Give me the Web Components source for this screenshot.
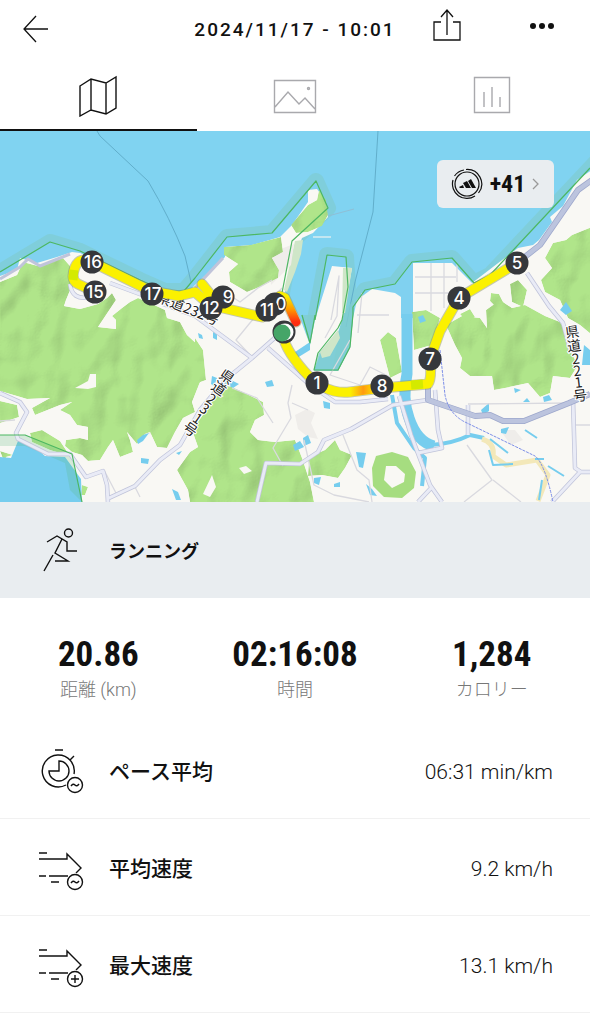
<!DOCTYPE html>
<html lang="ja">
<head>
<meta charset="utf-8">
<meta name="viewport" content="width=device-width, initial-scale=1">
<title>ランニング</title>
<style>
    body {
        margin: 0;
        background: #fff;
        color: #111;
        font-family: Roboto, "Noto Sans CJK JP", sans-serif;
    }
</style>
</head>
<body>
<workout-page></workout-page>

<script>
const ICONS = {
    run: `<svg width="48" height="48" viewBox="0 0 48 48"><circle cx="31.500" cy="7" r="4"/><path d="M10 16l10-6 10 6v9h10M25 13l-7 14 13 8H18M16 29L7 45"/></svg>`,
    pace: `<svg width="48" height="48" viewBox="0 0 48 48"><path d="M18 4h8M37 10l-4 4M37 28a16 16 0 1 0-8 11M22 24V15a10 10 0 1 1-10 10h10z"/><circle cx="38" cy="39" r="7.500"/><path d="M34 40q2-3 4-1t4-1"/></svg>`,
    speed: `<svg width="48" height="48" viewBox="0 0 48 48"><path d="M2 10h8M2 16h28V11l14 14-5 5M2 33h7M12 33h19M14 39h8"/><circle cx="38" cy="39" r="7.500"/><path d="M34 40q2-3 4-1t4-1"/></svg>`,
    max: `<svg width="48" height="48" viewBox="0 0 48 48"><path d="M2 10h8M2 16h28V11l14 14-5 5M2 33h7M12 33h19M14 39h8"/><circle cx="38" cy="39" r="7.500"/><path d="M34 39h8M38 35v8"/></svg>`
};

class WorkoutHeader extends HTMLElement {
    constructor() {
        super();
        this.attachShadow({mode: "open"}).innerHTML = `
            <style>
                :host {
                    display: block;
                }
                header {
                    display: grid;
                    grid-template-columns: 1fr auto 1fr;
                    align-items: center;
                    height: 58px;
                    padding: 0 20px;
                }
                h1 {
                    margin: 0;
                    font-size: 19px;
                    font-weight: 500;
                    letter-spacing: 2px;
                }
                .actions {
                    display: flex;
                    justify-content: flex-end;
                    gap: 63px;
                }
                button {
                    display: flex;
                    padding: 0;
                    border: 0;
                    background: none;
                    justify-self: start;
                }
                svg {
                    fill: none;
                    stroke: #111;
                    stroke-width: 1.3;
                }
            </style>
            <header>
                <button aria-label="戻る">
                    <svg width="40" height="40" viewBox="0 0 40 40"><path d="M16 7L4 20l12 13M4 20h24"/></svg>
                </button>
                <h1><slot></slot></h1>
                <div class="actions">
                    <button aria-label="共有">
                        <svg width="40" height="40" viewBox="0 0 40 40"><path d="M14 13H7v18h26V13h-7M20 26V2M14 8l6-7 6 7"/></svg>
                    </button>
                    <button aria-label="メニュー">
                        <svg width="40" height="40" viewBox="0 0 40 40" style="fill:#111;stroke:none"><circle cx="3" cy="17" r="3"/><circle cx="12" cy="17" r="3"/><circle cx="21" cy="17" r="3"/></svg>
                    </button>
                </div>
            </header>
        `;
    }
}

class TabBar extends HTMLElement {
    constructor() {
        super();
        this.attachShadow({mode: "open"}).innerHTML = `
            <style>
                :host {
                    display: block;
                }
                nav {
                    display: flex;
                    height: 73px;
                }
                button {
                    flex: 1;
                    display: flex;
                    align-items: center;
                    justify-content: center;
                    padding: 2px 0 0;
                    border: 0;
                    border-bottom: 2px solid transparent;
                    background: none;
                    color: #a9a9ad;
                }
                .active {
                    color: #111;
                    border-color: #111;
                }
                svg {
                    fill: none;
                    stroke: currentColor;
                    stroke-width: 1.400;
                }
            </style>
            <nav>
                <button class="active" aria-label="マップ">
                    <svg width="44" height="44" viewBox="0 0 44 44"><path d="M4 13l11-7 15 4 10-6v31l-10 6-15-4-11 6zM15 6v31M30 10v31"/></svg>
                </button>
                <button aria-label="写真">
                    <svg width="44" height="44" viewBox="0 0 44 44"><path d="M1.500 7.500h41v32h-41zM2 34l13-15 11 12 6-6 10 11"/><circle cx="35.500" cy="15.500" r="1"/></svg>
                </button>
                <button aria-label="グラフ">
                    <svg width="44" height="44" viewBox="0 0 44 44"><path d="M4.500 4.500h35v35h-35zM14 19v15M22 14v20M30 24v10"/></svg>
                </button>
            </nav>
        `;
    }
}

class PointsBadge extends HTMLElement {
    constructor() {
        super();
        this.attachShadow({mode: "open"}).innerHTML = `
            <style>
                :host {
                    display: block;
                }
                button {
                    display: flex;
                    align-items: center;
                    justify-content: space-between;
                    width: 117px;
                    height: 48px;
                    padding: 0 14px;
                    border: 0;
                    border-radius: 6px;
                    background: #e9edf0;
                    color: #111;
                    font: bold 24px "Roboto Condensed", sans-serif;
                }
                svg {
                    fill: none;
                    stroke: #111;
                }
            </style>
            <button>
                <svg width="32" height="32" viewBox="0 0 32 32" stroke-width="1.200">
                    <circle cx="16" cy="16" r="12"/>
                    <path d="M3.500 8A14.500 14.500 0 0 1 13 2M15 1.500A14.500 14.500 0 0 1 27.500 25M24 28A14.500 14.500 0 0 1 2 12"/>
                    <path fill="#111" stroke="none" d="M8 19l4-2 1 3H9zM12 15l4-2 4 7h-5zM17 13l3-2 5 9h-4z"/>
                </svg>
                <slot></slot>
                <svg width="8" height="12" viewBox="0 0 8 12" style="stroke:#999" stroke-width="1.300"><path d="M1 1l5 5-5 5"/></svg>
            </button>
        `;
    }
}

class RouteMap extends HTMLElement {
    constructor() {
        super();
        this.attachShadow({mode: "open"});
        // label, marker x, marker y, shift of the label inside its marker
        this.markers = [
            ["16", 92, 262, 1], ["15", 95, 292, 0], ["17", 152, 294, 1], ["9", 223, 297, 5], ["12", 211, 308, 0],
            ["0", 275, 304, 6], ["11", 267, 310, 0], ["1", 317, 383, 0], ["8", 382, 386, 0],
            ["7", 430, 359, 0], ["4", 459, 298, 0], ["5", 517, 263, 0]
        ];
        this.render();
    }

    renderMarkers() {
        return this.markers.map(([label, x, y, shift]) => `
            <circle cx="${x}" cy="${y}" r="11.500" class="marker"/>
            <text x="${x + shift}" y="${y + 6}" class="number">${label}</text>
        `).join("");
    }

    render() {
        this.shadowRoot.innerHTML = `
            <style>
                :host {
                    display: block;
                    position: relative;
                    background: #80d3f1;
                }
                .map {
                    display: block;
                    width: 100%;
                    height: auto;
                }
                .badge {
                    position: absolute;
                    top: 29px;
                    right: 36px;
                }
                .map path {
                    fill: none;
                    stroke-linejoin: round;
                }
                .map .zone {
                    fill: #80d1f0;
                    stroke: #7fcedb;
                    stroke-width: 16;
                    paint-order: stroke;
                }
                .map .land { fill: #f9f8f4; }
                .map .relief { fill: #efedea; }
                .map .green { fill: #b0e58a; }
                .map .water { fill: #76cdee; }
                .map .teal { fill: #7fcdcf; }
                .map .strip { fill: #cfe6c8; }
                .map .limit { stroke: #4db762; stroke-width: 1.200; }
                .map .lane { stroke: #d9d9df; stroke-width: 1.300; }
                .map .edge { stroke: #c0c4da; stroke-width: 4.500; }
                .map .road { stroke: #e9ebf6; stroke-width: 3; }
                .map .shore { stroke: #c0c4da; stroke-width: 3; }
                .map .major { stroke: #9ea8cc; stroke-width: 6; }
                .map .major.inner { stroke: #bcc4de; stroke-width: 4.500; }
                .map .river { stroke: #76cdee; }
                .map .track { stroke: #fbf100; stroke-width: 9; stroke-linecap: round; }
                .map .halo { stroke: #8e9568; stroke-width: 11; stroke-linecap: round; opacity: .5; }
                .marker { fill: #36383c; }
                .number {
                    fill: #fff;
                    font: 500 17px Inter, sans-serif;
                    text-anchor: middle;
                }
                .label {
                    fill: #222;
                    stroke: #fff;
                    stroke-width: 2;
                    paint-order: stroke;
                    font: 14px "Noto Sans CJK JP", sans-serif;
                }
                .vertical {
                    text-anchor: middle;
                }
            </style>
            <svg class="map" viewBox="0 131 590 371" role="img" aria-label="ルート">
                <defs>
                    <filter id="hills" x="0" y="0" width="1" height="1" color-interpolation-filters="sRGB">
                        <feTurbulence type="fractalNoise" baseFrequency=".035 .025" numOctaves="2" seed="8"/>
                        <feColorMatrix values="0 0 0 0 0  0 0 0 0 0  0 0 0 0 0  1 0 0 0 0"/>
                        <feDiffuseLighting surfaceScale="2.500" diffuseConstant="1.120" lighting-color="#fff">
                            <feDistantLight azimuth="225" elevation="62"/>
                        </feDiffuseLighting>
                        <feComposite in2="SourceGraphic" operator="arithmetic" k1="1"/>
                        <feComposite in2="SourceAlpha" operator="in"/>
                    </filter>
                    <linearGradient id="heat" x1="0" y1="0" x2="0" y2="1">
                        <stop offset="0" stop-color="#fbef00"/>
                        <stop offset=".5" stop-color="#ff9c00"/>
                        <stop offset="1" stop-color="#ff2d12"/>
                    </linearGradient>
                    <linearGradient id="warm">
                        <stop offset="0" stop-color="#fbf100"/>
                        <stop offset=".6" stop-color="#ff9a10"/>
                        <stop offset="1" stop-color="#fbd400"/>
                    </linearGradient>
                </defs>

                <!-- sea and harbour limits -->
                <path class="zone" d="M-20 284L0 272 50 242 80 251 140 280 165 291 184 291 195 278 227 237 272 233 316 181 328 208 292 241 282 293 280 360 0 360z"/>
                <path class="zone" d="M308 380L315 320 327 255 346 257 348 287 342 320 330 380z"/>
                <path class="zone" d="M353 360V307L365 290 395 284 412 262 452 258 474 283 490 275 610 147V360z"/>
                <path d="M97 131l3 5 48 45q22 37 37 75l6 26" stroke="#61aecb"/>
                <path d="M378 131l-5 81-18 70-9 45" stroke="#61aecb"/>
                <path d="M328 216l26-7" stroke="#8fbfd6"/>
                <path d="M313 237h18" stroke="#d8ecf0" stroke-width="1.500"/>

                <!-- land -->
                <path class="land" d="M0 276L17 270 20 258 37 263 57 257 72 252 80 253 100 262 140 282 165 293 187 293 195 285 225 257 225 247 252 245 280 237 292 225 308 202 308 190 317 189 323 197 328 217 313 233 302 238 295 257 287 287 285 292 300 318 310 345 315 320 332 266 352 268 343 318 338 332 322 350 314 370 338 371 350 348 353 318 357 300 372 289 395 293 401 297V318H413V263H452L472 283 518 248 533 245 539 240 552 222 550 217 563 206 577 180 592 170V504H0z"/>
                <path class="teal" d="M301 315h14l-5 28zM353 300v20l-3 28-12 23h-24l5-18 20-22 5-18z" opacity=".8"/>
                <path class="strip" d="M295 241l8-1-2 14-6 18-8 20-3-2zM343 268h9l-7 45h-3zM320 352l18-22 2 8-10 18-8 2z"/>
                <path class="relief" d="M270 262l8-12 16-6-3 21-12 12-8 8zM295 415l12-6 8 4-4 10 7 16-10-2-10-8zM500 430l15 0 8 10-12 5zM110 408l20-14 25 6 15 30-25 5z"/>

                <!-- hills -->
                <g filter="url(#hills)">
                    <path class="green" d="M0 282L17 275 23 262 38 266 63 258 70 266 71 288 66 300 64 306 80 309 98 304 107 298 112 293 116 300 108 312 98 327 116 329V320L112 316 122 308 130 302 138 298 150 303 165 310 167 318 180 322 187 335 198 345 204 372 192 402 195 412 183 418 175 432 167 448 157 447 150 432 145 434 137 444 127 432 130 440 133 452 120 457 113 440 108 447 100 460 88 461 82 455 72 452 65 446 66 440 80 438 88 440V427L77 425 70 415 60 410 72 402 60 405 35 415 32 408 50 398 27 399 0 391z"/>
                    <path class="green" d="M0 401l17 4 2 12-9 3-10 3zM30 433l12-3 18 11 10 15-20-6-18-8zM0 451l13 4-7 2-1 7zM82 485l6 2-3 8h-4z"/>
                    <path class="green" d="M224 247L250 245 281 237 283 252 272 258 279 270 278 278 262 286 247 292 230 282 229 272 238 264 224 255z"/>
                    <path class="green" d="M291 225L308 205 317 200 319 190 326 200 328 215 322 226 308 232 296 233z"/>
                    <path class="green" d="M222 385L232 387 245 393 263 402 264 415 255 420 250 432 258 440 275 442 295 440 302 458 310 482 314 502H190L188 490 177 470 190 452 198 447 192 430 205 412 215 397zM195 338L203 350 206 380 195 384z"/>
                    <path class="green" d="M309 457L325 450 335 440 340 450 352 455 345 468 338 478 322 475 308 476z"/>
                    <path class="green" d="M446 325L462 316 480 318 487 328 486 310 500 300 512 308 525 305 545 316 560 322 565 330 567 345 578 365 570 378 553 376 550 393 540 397 528 383 505 388 494 390 492 376 470 376 460 368 462 358 455 345z"/>
                    <path class="green" d="M592 227L572 235 566 240 553 243 545 258 552 268 541 280 545 292 560 300 568 318 580 325 592 335z"/>
                    <path class="green" d="M380 340L388 332 396 338 402 372 390 378zM412 312L426 310 440 318 432 345 414 350zM491 293l8 1 5 10-8 3-6-6zM510 284l8-4 9 10-4 17-11-5zM460 314l10-5 5 8-8 5zM0 498h18v4H0z"/>
                </g>
                <path class="land" d="M75 388l13-7 2-7h6v13l-8 2zM239 468l7-2 6 5-8 3zM212 475l4 12-6 10-7-3z"/>
                <path class="green" fill-rule="evenodd" style="fill:#a6dd80" d="M376 456L392 452 408 457 416 472 414 488 402 498 384 497 373 486 372 468zM386 466L384 480 392 488 404 482 405 474 396 466z"/>

                <!-- rivers and ponds -->
                <path class="river" d="M407 314v60q-5 25 2 44 8 24 25 28" stroke-width="11"/>
                <path class="river" d="M430 445q22-1 40-10l14 3M392 395l5 28 17 25 11 10-3 28" stroke-width="4"/>
                <path d="M482 439q13 4 11 17l13 9 31-5 11 15-10 26" stroke="#f3e8b9" stroke-width="5"/>
                <path class="river" d="M490 439l18 14M525 430l12 8M535 459h9M548 466l16 10M489 450l4 15 20-1M542 480l-3 20" stroke-width="2"/>
                <path class="water" d="M137 440l6-5 6-2-6 8-5 3zM141 458l8 1-1 5-7-1zM172 489l6 3 3 8h-5zM265 382l7-2 2 6-7 1zM323 401l7 2v6l-6-1zM303 438l5-3 3 8-7 3zM356 452l10 1-3 15-4-1zM314 478l7-1-2 8-5-2zM334 484l6-2v5h-6zM366 484l6 5 5 7-7-1zM213 332l4 2v6l-4-2zM198 333l4 2 1 4-4-1zM481 410l8-7v8l-6 4zM501 429l8-2-3 7-5-1zM543 397l6-2 3 5-8 2zM523 402l4-4 3 4zM584 345l6 5v15h-8zM560 310l6-8 6 9-6 4zM514 388l7 2-6 3zM222 382l7-3 10 5-6 4zM293 445l7-4 4 6-9 4zM295 352l15-10v8l-13 8zM176 453l6-2-3 4zM418 317l5-2 3 6-6 2zM212 376l5 2-3 8-3-2z"/>
                <path class="water" d="M0 457l11 1 7-17 12 2 15 13 20 1 16 22 1 24H0z"/>
                <path d="M0 435h25l47 19 10 48-12-12-5-27-40-17H0z" style="fill:#55b77a;opacity:.22"/>

                <!-- local lanes -->
                <path class="lane" d="M415 277h41M415 293h46M431 263v48M444 263v45M457 264v18M253 358l-17-18 18-22 28-30M225 292l15 10 18-14 14-8M292 385l-4 18 3 15-18 30 10 18M292 403l16 7M304 440l10 45 20 10 35 7M343 435l14 35 12 10 3 22M232 388l25 10 16 25M467 445l25 35-28 22M493 480l28 22M575 425h15M468 404l105-1M350 340l-20 35 30 10 10-18 20 10M0 421l15-1M357 315h32M362 293l-4 40M104 470l13 25M135 487l5 10M331 320l8-44-2 40-12 22"/>
                <path class="shore" d="M0 279l20-12 8-8 12 7 30-12M195 288l28-30"/>
                <path class="edge" d="M0 393l20 9 7 10-11 21 2 6 30 15h22l16 23 17-6 4 14 1 18M109 498l26-12 25-26 20-15 20-35 25-30 27-22 26-23M195 316l57 42M268 348l42 37 25 17h25l28-3M257 502l9-39 34 1 18-12 6-12 27-11 42-24 35-5M399 396l12 39 19 50 12 17M432 487l-14 15M435 390l3 40 4 18-24 5M527 273l22 33 14 17 8 30M573 400l2 68 6 4h9M580 472l-28 30M70 284q2 17 20 13l8-4M110 283l35 13M195 316l-32-12M468 405v30"/>
                <path class="road" d="M0 393l20 9 7 10-11 21 2 6 30 15h22l16 23 17-6 4 14 1 18M109 498l26-12 25-26 20-15 20-35 25-30 27-22 26-23M195 316l57 42M268 348l42 37 25 17h25l28-3M257 502l9-39 34 1 18-12 6-12 27-11 42-24 35-5M399 396l12 39 19 50 12 17M432 487l-14 15M435 390l3 40 4 18-24 5M527 273l22 33 14 17 8 30M573 400l2 68 6 4h9M580 472l-28 30M70 284q2 17 20 13l8-4M110 283l35 13M195 316l-32-12M468 405v30"/>
                <path class="major" d="M428 384v16l47 16 15-1 13 6h21l45-18 21-9M592 180l-14 10-38 55-23 18"/>
                <path class="major inner" d="M428 384v16l47 16 15-1 13 6h21l45-18 21-9M592 180l-14 10-38 55-23 18"/>
                <path d="M440 350l5 45q4 20 22 28l68 33q10 8 18 46" stroke="#7c8ee8" stroke-dasharray="3 1"/>

                <path class="limit" d="M0 272l50-30 30 9 60 29 25 11h19l11-13 32-41 45-4 44-52 12 27-36 33-10 52M315 320l12-65 19 2 2 30-6 33-4 8-20 25-4 17h24l12-23 3-33v-7l12-17 30-6 17-22 40-4 22 25 16-8L590 168M302 315l8 28 5-28M0 435h25l47 19 10 48"/>

                <text class="label" transform="translate(156 301) rotate(22)">県道232号</text>
                <text class="label vertical" transform="translate(224 381) rotate(35)" x="0 0 0 0 0 0" y="0 14 27 39 51 64">県道231号</text>
                <text class="label vertical" transform="translate(573 337) rotate(-7)" x="0 0 0 0 0 0" y="0 14 27 39 51 64">県道221号</text>

                <!-- recorded route -->
                <path class="halo" d="M95 292l-17-8q-8-4-3-17 5-11 17-5l59 29 28 5 16-4 15 13 52 12M202 284l12 15M280 296l5 2 11 24M283 333q0 14 21 38t46 21l32-4 46-4q4-5 2-25l10-28 19-33 58-35"/>
                <path class="track" d="M95 292l-17-8q-8-4-3-17 5-11 17-5l59 29 28 5 16-4 15 13 52 12M202 284l12 15M283 333q0 14 21 38t46 21l32-4 46-4q4-5 2-25l10-28 19-33 58-35"/>
                <path class="track" style="stroke:url(#heat)" d="M280 296l5 2 11 24"/>
                <path class="track" style="stroke:url(#warm)" d="M350 392l22-3"/>
                <path class="track" style="stroke:#d4ea00;stroke-linecap:butt" d="M411 385l12-1M74 270l-1 10"/>

                ${this.renderMarkers()}
                <circle cx="284" cy="332" r="11.500" class="marker"/>
                <circle cx="285" cy="332" r="8.500" fill="#fff"/>
                <circle cx="282" cy="333" r="8.500" fill="#45a568"/>
            </svg>
            <div class="badge"><slot></slot></div>
        `;
    }
}

class ActivityBanner extends HTMLElement {
    constructor() {
        super();
        this.attachShadow({mode: "open"}).innerHTML = `
            <style>
                :host {
                    display: flex;
                    align-items: center;
                    gap: 24px;
                    height: 96px;
                    padding: 0 37px;
                    background: #e9edf0;
                }
                svg {
                    display: block;
                    fill: none;
                    stroke: #111;
                    stroke-width: 1.400;
                }
                h2 {
                    margin: 0;
                    font-size: 18px;
                    font-weight: 700;
                }
            </style>
            ${ICONS.run}
            <h2><slot></slot></h2>
        `;
    }
}

class StatTile extends HTMLElement {
    constructor() {
        super();
        this.attachShadow({mode: "open"}).innerHTML = `
            <style>
                :host {
                    flex: 1;
                    display: flex;
                    flex-direction: column;
                    align-items: center;
                }
                .value {
                    font: bold 35px/44px "Roboto Condensed", sans-serif;
                }
                .name {
                    color: #777;
                    font-size: 18px;
                    font-weight: 300;
                    line-height: 26px;
                }
            </style>
            <div class="value"><slot></slot></div>
            <div class="name">${this.getAttribute("name")}</div>
        `;
    }
}

class MetricRow extends HTMLElement {
    constructor() {
        super();
        this.attachShadow({mode: "open"}).innerHTML = `
            <style>
                :host {
                    display: flex;
                    align-items: center;
                    height: 96px;
                    padding: 0 37px;
                    border-bottom: 1px solid #f1f1f1;
                }
                svg {
                    display: block;
                    margin-right: 24px;
                    fill: none;
                    stroke: #111;
                    stroke-width: 1.400;
                }
                .name {
                    flex: 1;
                    font-size: 21px;
                    font-weight: 500;
                }
                .value {
                    padding-top: 4px;
                    font-size: 21px;
                    font-weight: 300;
                }
            </style>
            ${ICONS[this.getAttribute("icon")]}
            <div class="name">${this.getAttribute("name")}</div>
            <div class="value"><slot></slot></div>
        `;
    }
}

class WorkoutPage extends HTMLElement {
    constructor() {
        super();
        this.attachShadow({mode: "open"}).innerHTML = `
            <style>
                :host {
                    display: block;
                }
                .stats {
                    display: flex;
                    padding: 35px 0 19px;
                }
            </style>
            <workout-header>2024/11/17 - 10:01</workout-header>
            <tab-bar></tab-bar>
            <route-map><points-badge>+41</points-badge></route-map>
            <activity-banner>ランニング</activity-banner>
            <section class="stats">
                <stat-tile name="距離 (km)">20.86</stat-tile>
                <stat-tile name="時間">02:16:08</stat-tile>
                <stat-tile name="カロリー">1,284</stat-tile>
            </section>
            <metric-row icon="pace" name="ペース平均">06:31 min/km</metric-row>
            <metric-row icon="speed" name="平均速度">9.2 km/h</metric-row>
            <metric-row icon="max" name="最大速度">13.1 km/h</metric-row>
        `;
    }
}

customElements.define("workout-header", WorkoutHeader);
customElements.define("tab-bar", TabBar);
customElements.define("points-badge", PointsBadge);
customElements.define("route-map", RouteMap);
customElements.define("activity-banner", ActivityBanner);
customElements.define("stat-tile", StatTile);
customElements.define("metric-row", MetricRow);
customElements.define("workout-page", WorkoutPage);
</script>
</body>
</html>
